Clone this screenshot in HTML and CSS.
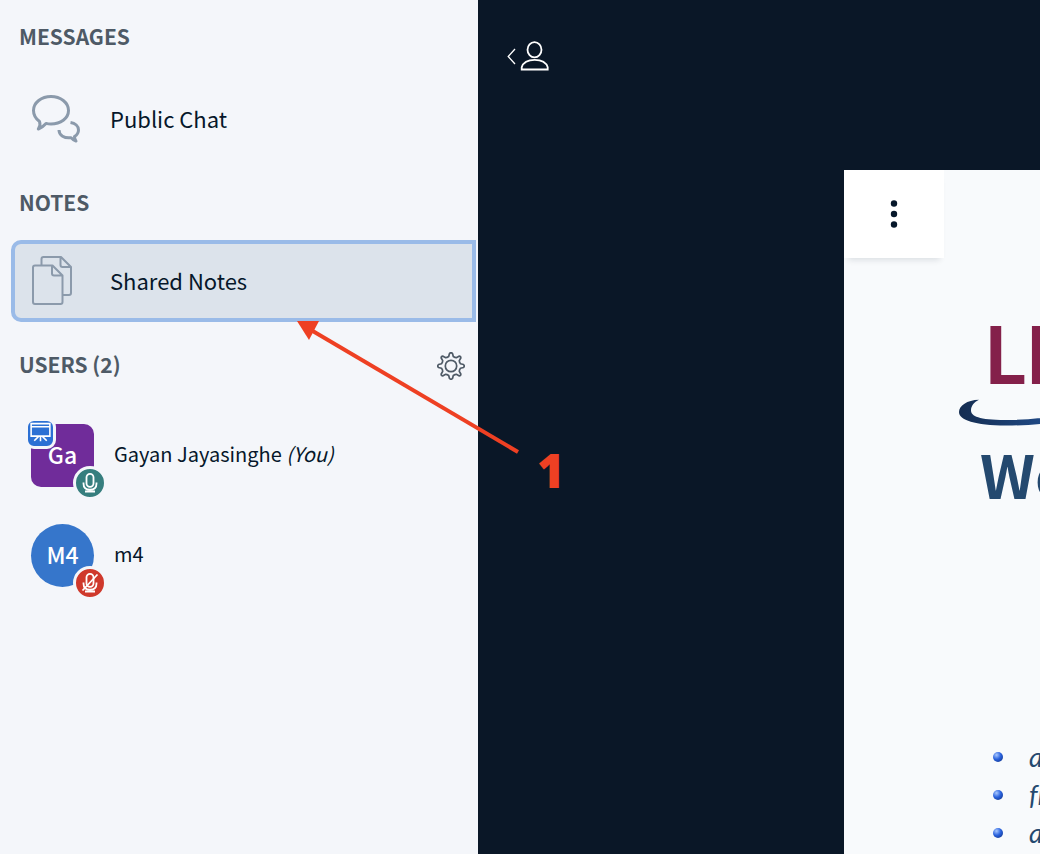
FILE: index.html
```html
<!DOCTYPE html>
<html lang="en">
<head>
<meta charset="utf-8">
<title>Shared Notes</title>
<link rel="stylesheet" href="styles.css">
</head>
<body>
<div class="app">
  <aside class="sidebar">
    <section class="section section-messages">
      <h2 class="heading">MESSAGES</h2>
      <button class="row" type="button">
        <svg class="row-icon" viewBox="0 0 48 50" fill="none" stroke="#8b9aab" stroke-width="3" stroke-linejoin="round">
          <path d="M7.500 27.500C3.500 24.500 1.500 20.700 1.500 16.500 1.500 8.500 9.500 2.500 19 2.500s17.500 6 17.500 14-8 13.500-17.500 13.500c-1.800 0-3.500-.2-5-.6-2 2.300-4.700 4.300-7.700 5.600 1.700-2.500 2.200-5 1.200-7.500z"/>
          <path d="M38.500 28.500c4.700.8 8 3.800 8 7.500 0 2.800-1.500 5-4 6.500.1 1.700.5 3 1.500 4.500-2.300-.8-4-2-5-3.300-6.500.9-12-2.200-12-7.700"/>
        </svg>
        <span class="row-label">Public Chat</span>
      </button>
    </section>
    <section class="section">
      <h2 class="heading">NOTES</h2>
      <button class="row row-active" type="button">
        <svg class="row-icon" viewBox="0 0 48 50" fill="none" stroke="#8b9aab" stroke-width="2" stroke-linejoin="round">
          <path d="M9.500 9.500V3q0-2 2-2H29l10 10v26q0 2-2 2h-6M28.500 1v8q0 2 2 2H39"/>
          <path d="M3 9.500h17.500l10 10V46q0 2-2 2H3q-2 0-2-2V11.500q0-2 2-2zM20 9.500v8q0 2 2 2h8.500"/>
        </svg>
        <span class="row-label">Shared Notes</span>
      </button>
    </section>
    <section class="section section-users">
      <div class="users-head">
        <h2 class="heading">USERS (2)</h2>
        <button class="icon-button" type="button" aria-label="Manage users">
          <svg class="gear" viewBox="-14 -14 28 28" fill="none" stroke="#4e5a66" stroke-width="1.700" stroke-linejoin="round">
            <circle r="5.700"/>
            <path d="M-1.500-12.500Q0-14 1.500-12.500L2.300-9.500Q4-8.300 5.300-8.300L8-9.800Q10-10 9.800-8L8.300-5.300Q8.300-4 9.500-2.300L12.500-1.500Q14 0 12.500 1.500L9.500 2.300Q8.300 4 8.300 5.300L9.800 8Q10 10 8 9.800L5.300 8.300Q4 8.300 2.300 9.500L1.500 12.500Q0 14-1.500 12.500L-2.300 9.500Q-4 8.300-5.300 8.300L-8 9.800Q-10 10-9.800 8L-8.300 5.300Q-8.300 4-9.500 2.300L-12.500 1.500Q-14 0-12.500-1.500L-9.500-2.300Q-8.300-4-8.300-5.300L-9.800-8Q-10-10-8-9.800L-5.300-8.300Q-4-8.300-2.300-9.500Z"/>
          </svg>
        </button>
      </div>
      <ul class="users">
        <li class="user">
          <span class="avatar avatar-moderator">Ga
            <span class="badge badge-presenter">
              <svg viewBox="0 0 24 24" fill="none" stroke="#fff" stroke-width="1.500"><path d="M3 2.500h18v12H3zM3 5.500h18M12 14.500v5M10 15l-4 4M14 15l4 4"/></svg>
            </span>
            <span class="badge badge-mic">
              <svg viewBox="0 0 28 28" fill="none" stroke="#fff" stroke-width="1.800"><rect x="10.500" y="4.800" width="7" height="13" rx="3.500"/><path d="M7.500 13.500v1q0 6.200 6.500 6.200t6.500-6.200v-1M14 20.500v2M9 22.500h10"/></svg>
            </span>
          </span>
          <span class="user-name">Gayan Jayasinghe <em>(You)</em></span>
        </li>
        <li class="user">
          <span class="avatar">M4
            <span class="badge badge-mic badge-muted">
              <svg viewBox="0 0 28 28" fill="none" stroke="#fff" stroke-width="1.800"><rect x="10.500" y="4.800" width="7" height="13" rx="3.500"/><path d="M7.500 13.500v1q0 6.200 6.500 6.200t6.500-6.200v-1M14 20.500v2M9 22.500h10M6.500 21.500L21.500 5.500"/></svg>
            </span>
          </span>
          <span class="user-name">m4</span>
        </li>
      </ul>
    </section>
  </aside>
  <main class="stage">
    <header class="topbar">
      <button class="icon-button" type="button" aria-label="Toggle users list">
        <svg class="toggle" viewBox="0 0 42 30" fill="none" stroke="#fff" stroke-width="1.800"><path d="M8 8L1.200 15.500 8 23" stroke-width="1.300"/><ellipse cx="27.500" cy="8.700" rx="7" ry="7.600"/><path d="M14.700 28.500v-2.300q2.300-7.400 13-7.400t13 7.400v2.300z"/></svg>
      </button>
    </header>
    <div class="slide">
      <button class="options" type="button" aria-label="Options">
        <svg class="dots" viewBox="0 0 8 28" fill="#06172a"><circle cx="4" cy="3.500" r="3.200"/><circle cx="4" cy="14" r="3.200"/><circle cx="4" cy="24.500" r="3.200"/></svg>
      </button>
      <div class="slide-body">
        <div class="brand">LI</div>
        <svg class="swoosh" viewBox="0 0 120 28"><defs><linearGradient id="sw"><stop offset="0" stop-color="#152d51"/><stop offset="1" stop-color="#24549a"/></linearGradient></defs><path fill="url(#sw)" d="M21 .8C9 1 1 7 1 13c0 8 16 13.500 47 13.500 30 0 54-3 71-9v-6c-20 6-45 9.500-72 9.500-26 0-34-4-34-9.500C13 7 16 3 21 .8z"/></svg>
        <div class="welcome">We</div>
        <ul class="points">
          <li>a</li>
          <li>fr</li>
          <li>a</li>
        </ul>
      </div>
    </div>
  </main>
  <svg class="arrow" viewBox="0 0 222 134"><path d="M221 131L14 9" stroke="#ee4023" stroke-width="4"/><path d="M0 0h22L12 19z" fill="#ee4023"/></svg>
  <span class="step">1</span>
</div>
</body>
</html>
```
FILE: styles.css
```css
* { box-sizing: border-box; }
body {
  margin: 0;
  font-family: "Noto Sans CJK SC", "Noto Sans", sans-serif;
  font-size: 22px;
  color: #06172a;
}
button {
  font: inherit;
  color: inherit;
  border: 0;
  background: none;
  padding: 0;
  cursor: pointer;
}
.app {
  position: relative;
  display: flex;
  height: 100vh;
  overflow: hidden;
}
.sidebar {
  flex: 0 0 478px;
  padding: 20px 2px 0 11px;
  background: #f4f6fa;
}
.section { margin-bottom: 26px; }
.heading {
  margin: 0 0 22px 8px;
  font-size: 21px;
  line-height: 32px;
  font-weight: 700;
  color: #4e5a66;
}
.section-messages .heading { margin-bottom: 26px; }
.row {
  display: flex;
  align-items: center;
  gap: 30px;
  width: 100%;
  height: 82px;
  padding-left: 17px;
  border: 4px solid transparent;
  border-radius: 10px 0 0 10px;
  text-align: left;
}
.row-active {
  background: #dce3eb;
  border-color: #9abbe8;
}
.row-icon { width: 48px; height: 50px; }
.row-label { padding-bottom: 2px; }
.users-head {
  display: flex;
  justify-content: space-between;
  padding-right: 11px;
}
.users-head .heading { margin-bottom: 0; }
.icon-button { display: flex; align-items: center; }
.users-head .icon-button { padding-top: 3px; }
.gear { width: 28px; height: 28px; }
.users {
  list-style: none;
  margin: 44px 0 0;
  padding: 0 0 0 20px;
}
.user {
  display: flex;
  align-items: center;
  gap: 20px;
  height: 63px;
  margin-bottom: 37px;
}
.avatar {
  position: relative;
  display: flex;
  align-items: center;
  justify-content: center;
  width: 63px;
  height: 63px;
  padding-bottom: 4px;
  border-radius: 50%;
  background: #3676cb;
  color: #fff;
  font-size: 23px;
  font-weight: 500;
}
.avatar-moderator {
  border-radius: 10px;
  background: #702c9a;
}
.badge {
  position: absolute;
  border: 3px solid #f4f6fa;
}
.badge svg { display: block; width: 100%; height: 100%; }
.badge-presenter {
  top: -6px;
  left: -6px;
  width: 31px;
  height: 31px;
  border-radius: 9px;
  background: #2b70d4;
}
.badge-mic {
  right: -13px;
  bottom: -13px;
  width: 34px;
  height: 34px;
  border-radius: 50%;
  background: #367e7e;
}
.badge-muted { background: #cf392c; }
.user-name {
  padding-bottom: 4px;
  font-size: 20px;
}
.stage {
  flex: 1;
  min-width: 0;
  display: flex;
  flex-direction: column;
  background: #0a1727;
}
.topbar {
  flex: 0 0 170px;
  padding: 41px 29px;
}
.toggle { width: 42px; height: 30px; }
.slide {
  flex: 1;
  min-height: 0;
  margin-left: 366px;
  overflow: hidden;
  background: #f8fafc;
}
.options {
  display: flex;
  align-items: center;
  justify-content: center;
  width: 100px;
  height: 88px;
  background: #fff;
  box-shadow: 0 6px 6px -4px rgba(6, 23, 42, 0.12);
}
.dots { width: 8px; height: 28px; }
.slide-body {
  display: flex;
  flex-direction: column;
  padding: 51px 0 0 114px;
  white-space: nowrap;
}
.brand {
  padding: 0 0 2px 26px;
  font-family: Lato, sans-serif;
  font-size: 80px;
  line-height: 88px;
  font-weight: 700;
  color: #84204a;
}
.swoosh { width: 120px; height: 28px; }
.welcome {
  padding-left: 22px;
  font-size: 60px;
  line-height: 92px;
  font-weight: 700;
  color: #24496f;
}
.points {
  list-style: none;
  margin: 219px 0 0 35px;
  padding: 0;
  font-family: Lato, sans-serif;
  font-style: italic;
  font-size: 27px;
  line-height: 38px;
  color: #24496f;
}
.points li {
  display: flex;
  align-items: center;
  gap: 26px;
}
.points li::before {
  content: "";
  flex: none;
  width: 10px;
  height: 10px;
  border-radius: 50%;
  background: radial-gradient(circle at 35% 30%, #a9c8ff, #2a62de 45%, #0c2a78);
}
.arrow {
  position: absolute;
  left: 297px;
  top: 321px;
  width: 222px;
  height: 134px;
}
.step {
  position: absolute;
  left: 537px;
  top: 439px;
  font-family: "Open Sans", sans-serif;
  font-size: 47px;
  line-height: 62px;
  font-weight: 800;
  color: #ee4023;
}
```
